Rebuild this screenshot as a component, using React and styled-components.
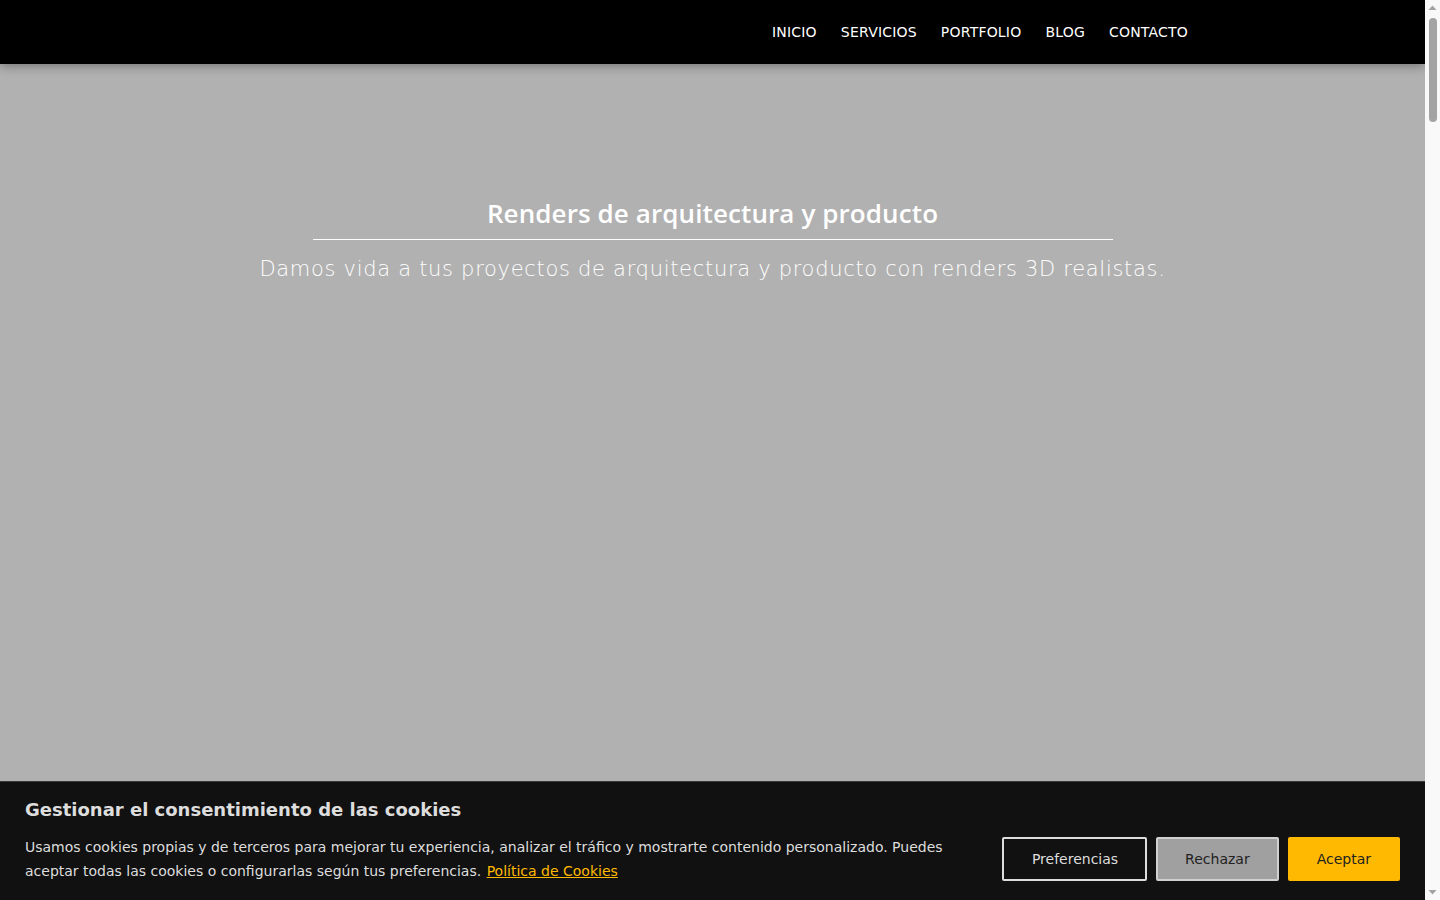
import React from 'react';
import styled, { createGlobalStyle } from 'styled-components';

const GlobalStyle = createGlobalStyle`
    html, body {
        margin: 0;
        padding: 0;
    }
    body {
        font-family: "DejaVu Sans", "Liberation Sans", sans-serif;
        background: #b1b1b1;
        color: #fff;
        margin-right: 15px;
    }
    * {
        box-sizing: border-box;
    }
`;

const Header = styled.header`
    position: sticky;
    top: 0;
    z-index: 100;
    height: 64px;
    background: #000;
    box-shadow: 0 2px 10px rgba(0, 0, 0, 0.35);
    display: flex;
    align-items: center;
    justify-content: flex-end;
    padding: 0 237px 2px 24px;
`;

const NavList = styled.ul`
    display: flex;
    gap: 24px;
    list-style: none;
    margin: 0;
    padding: 0;
`;

const NavLink = styled.a`
    color: #fff;
    text-decoration: none;
    font-size: 14px;
    letter-spacing: 0.2px;
    text-transform: uppercase;
    &:hover {
        color: #ffb900;
    }
`;

const Hero = styled.section`
    height: 836px;
    background: #b1b1b1;
    display: flex;
    flex-direction: column;
    align-items: center;
    padding-top: 132px;
`;

const HeroTitle = styled.h1`
    margin: 0;
    font-family: "Open Sans", sans-serif;
    font-weight: 600;
    font-size: 26px;
    line-height: 34px;
    letter-spacing: 0.1px;
    color: #fff;
    padding-bottom: 9px;
    width: 800px;
    text-align: center;
    border-bottom: 1px solid #fff;
`;

const HeroText = styled.p`
    margin: 15px 0 0;
    font-family: "DejaVu Sans", sans-serif;
    font-weight: 200;
    font-size: 21px;
    letter-spacing: 0.7px;
    line-height: 28px;
    color: #fff;
`;

const Section = styled.section`
    height: ${props => props.height}px;
    background: ${props => props.bg};
    padding: 80px 0;
    text-align: center;
    color: #222;
`;

const SectionTitle = styled.h2`
    margin: 0;
    font-family: "Open Sans", sans-serif;
    font-weight: 600;
    font-size: 28px;
`;

const CookieBanner = styled.div`
    position: fixed;
    left: 0;
    right: 15px;
    bottom: 0;
    z-index: 200;
    background: #111;
    border-top: 1px solid #3a3a3a;
    padding: 17px 25px;
    color: #ddd;
`;

const CookieTitle = styled.h3`
    margin: 0 0 14px;
    font-size: 18px;
    line-height: 22px;
    font-weight: 700;
    color: #ddd;
`;

const CookieRow = styled.div`
    display: flex;
    align-items: center;
    gap: 50px;
`;

const CookieText = styled.p`
    flex: 1;
    margin: 0;
    font-size: 14px;
    line-height: 24px;
    color: #ddd;
`;

const CookieLink = styled.a`
    color: #ffb900;
    text-decoration: underline;
    margin-left: 1px;
`;

const ButtonGroup = styled.div`
    display: flex;
    gap: 9px;
    flex-shrink: 0;
`;

const variants = {
    outline: 'background: #111; border-color: #ddd; color: #ddd; padding: 0 27px 0 28px;',
    grey: 'background: #a0a0a0; border-color: #d0d0d0; color: #222;',
    primary: 'background: #ffb900; border-color: #ffb900; color: #222;',
};

const CookieButton = styled.button`
    height: 44px;
    padding: 0 27px;
    border: 2px solid;
    border-radius: 2px;
    font-family: "DejaVu Sans", sans-serif;
    font-size: 14px;
    cursor: pointer;
    ${props => variants[props.variant]}
`;

/* window scrollbar, drawn since the capture hides the native one */
const ScrollRail = styled.div`
    position: fixed;
    top: 0;
    right: 0;
    bottom: 0;
    width: 15px;
    z-index: 300;
    background: #f9f9f9;
    display: flex;
    flex-direction: column;
    align-items: center;
`;

const ScrollArrow = styled.svg`
    flex-shrink: 0;
    width: 15px;
    height: 15px;
`;

const ScrollThumb = styled.div`
    margin-top: 3px;
    width: 8px;
    height: 104px;
    border-radius: 4px;
    background: #a3a3a3;
`;

const ScrollSpace = styled.div`
    flex: 1;
`;

const navItems = ['Inicio', 'Servicios', 'Portfolio', 'Blog', 'Contacto'];

export default function App() {
    return (
        <>
            <GlobalStyle />
            <Header>
                <NavList>
                    {navItems.map(item => (
                        <li key={item}>
                            <NavLink href={`#${item.toLowerCase()}`}>{item}</NavLink>
                        </li>
                    ))}
                </NavList>
            </Header>
            <Hero id="inicio">
                <HeroTitle>Renders de arquitectura y producto</HeroTitle>
                <HeroText>
                    Damos vida a tus proyectos de arquitectura y producto con renders 3D realistas.
                </HeroText>
            </Hero>
            <Section id="servicios" height={1800} bg="#f4f4f4">
                <SectionTitle>Servicios</SectionTitle>
            </Section>
            <Section id="portfolio" height={2200} bg="#fff">
                <SectionTitle>Portfolio</SectionTitle>
            </Section>
            <Section id="blog" height={1500} bg="#f4f4f4">
                <SectionTitle>Blog</SectionTitle>
            </Section>
            <Section id="contacto" height={1100} bg="#fff">
                <SectionTitle>Contacto</SectionTitle>
            </Section>
            <CookieBanner>
                <CookieTitle>Gestionar el consentimiento de las cookies</CookieTitle>
                <CookieRow>
                    <CookieText>
                        Usamos cookies propias y de terceros para mejorar tu experiencia, analizar el
                        tráfico y mostrarte contenido personalizado. Puedes aceptar todas las cookies
                        o configurarlas según tus preferencias.{' '}
                        <CookieLink href="#cookies">Política de Cookies</CookieLink>
                    </CookieText>
                    <ButtonGroup>
                        <CookieButton variant="outline">Preferencias</CookieButton>
                        <CookieButton variant="grey">Rechazar</CookieButton>
                        <CookieButton variant="primary">Aceptar</CookieButton>
                    </ButtonGroup>
                </CookieRow>
            </CookieBanner>
            <ScrollRail aria-hidden="true">
                <ScrollArrow viewBox="0 0 15 15">
                    <path d="M3.5 10 L7.5 5.5 L11.5 10 Z" fill="#a3a3a3" />
                </ScrollArrow>
                <ScrollThumb />
                <ScrollSpace />
                <ScrollArrow viewBox="0 0 15 15">
                    <path d="M3.5 5 L7.5 9.5 L11.5 5 Z" fill="#a3a3a3" />
                </ScrollArrow>
            </ScrollRail>
        </>
    );
}
